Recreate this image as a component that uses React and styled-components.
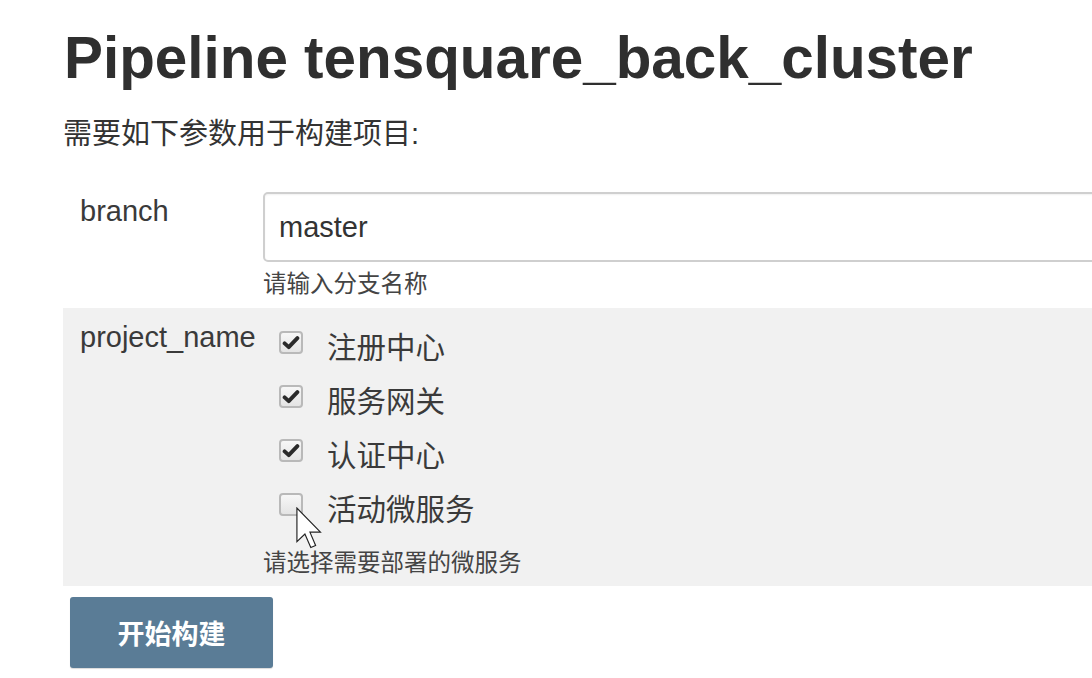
import React from "react";
import styled, { createGlobalStyle } from "styled-components";

const GlobalStyle = createGlobalStyle`
  html, body {
    margin: 0;
    padding: 0;
    background: #ffffff;
    overflow: hidden;
  }
  body {
    font-family: "Liberation Sans", Arial, "Noto Sans CJK SC", sans-serif;
    color: #333333;
  }
`;

const Page = styled.div`
  position: relative;
  width: 1092px;
  height: 678px;
  overflow: hidden;
  padding-left: 63px;
  box-sizing: border-box;
`;

const Title = styled.h1`
  margin: 23px 0 0 1px;
  font-size: 58.4px;
  line-height: 70px;
  font-weight: 700;
  color: #2f2f2f;
  white-space: nowrap;
`;

const Intro = styled.p`
  margin: 24px 0 0;
  font-size: 29px;
  line-height: 34px;
  color: #333;
`;

const Form = styled.div`
  margin-top: 34px;
  width: 1200px;
`;

const Row = styled.div`
  display: grid;
  grid-template-columns: 200px 1fr;
  background: ${(p) => (p.$shaded ? "#f1f1f1" : "transparent")};
  padding: ${(p) => p.$pad};
`;

const Label = styled.div`
  padding-left: 17px;
  margin-top: ${(p) => p.$top}px;
  font-size: 29px;
  line-height: 34px;
  color: #3a3a3a;
  white-space: nowrap;
`;

const Value = styled.div`
  display: flex;
  flex-direction: column;
  padding-top: ${(p) => p.$top || 0}px;
`;

const TextInput = styled.input`
  box-sizing: border-box;
  width: 940px;
  height: 70px;
  border: 2px solid #cfcfcf;
  border-radius: 5px;
  padding: 0 14px;
  font-family: inherit;
  font-size: 29px;
  color: #333;
  background: #fff;
  box-shadow: inset 0 1px 2px rgba(0, 0, 0, 0.06);
  outline: none;
`;

const Help = styled.div`
  margin-top: ${(p) => p.$top}px;
  font-size: 23.5px;
  line-height: 28px;
  color: #444;
  white-space: nowrap;
`;

const CheckItem = styled.label`
  display: flex;
  align-items: flex-start;
  height: 54px;
`;

const Box = styled.span`
  box-sizing: border-box;
  width: 24px;
  height: 23px;
  margin: 10px 0 0 16px;
  border: 2px solid #b9b9b9;
  border-radius: 4px;
  background: linear-gradient(#f7f7f7, #e4e4e4);
  display: flex;
  align-items: center;
  justify-content: center;
  flex: none;
`;

const CheckText = styled.span`
  margin: 10px 0 0 24px;
  font-size: 29.5px;
  line-height: 34px;
  color: #3a3a3a;
`;

const BuildButton = styled.button`
  margin: 11px 0 0 7px;
  width: 203px;
  height: 71px;
  border: none;
  border-radius: 3px;
  background: #5a7c96;
  color: #ffffff;
  font-family: inherit;
  font-size: 27px;
  font-weight: 700;
  cursor: pointer;
  box-shadow: 0 1px 1px rgba(0, 0, 0, 0.15);
`;

const Cursor = styled.svg`
  position: absolute;
  left: 295px;
  top: 507px;
  pointer-events: none;
`;

const Check = ({ checked, children }) => (
  <CheckItem>
    <Box>
      {checked && (
        <svg width="18" height="18" viewBox="0 0 24 24">
          <path
            d="M3.5 12.5 L9 17.5 L20.5 5.5"
            fill="none"
            stroke="#2a2a2a"
            strokeWidth="5.2"
            strokeLinecap="round"
            strokeLinejoin="round"
          />
        </svg>
      )}
    </Box>
    <CheckText>{children}</CheckText>
  </CheckItem>
);

const projects = [
  { name: "注册中心", checked: true },
  { name: "服务网关", checked: true },
  { name: "认证中心", checked: true },
  { name: "活动微服务", checked: false },
];

export default function App() {
  return (
    <>
      <GlobalStyle />
      <Page>
        <Title>Pipeline tensquare_back_cluster</Title>
        <Intro>需要如下参数用于构建项目:</Intro>
        <Form>
          <Row $pad="7px 0 10px">
            <Label $top={2}>branch</Label>
            <Value>
              <TextInput defaultValue="master" />
              <Help $top={8}>请输入分支名称</Help>
            </Value>
          </Row>
          <Row $shaded $pad="0 0 9px">
            <Label $top={12}>project_name</Label>
            <Value $top={13}>
              {projects.map((p) => (
                <Check key={p.name} checked={p.checked}>
                  {p.name}
                </Check>
              ))}
              <Help $top={12}>请选择需要部署的微服务</Help>
            </Value>
          </Row>
        </Form>
        <BuildButton>开始构建</BuildButton>
        <Cursor width="28" height="42" viewBox="-0.5 -0.5 12.5 20">
          <path
            d="M0 0 L0 16 L3.8 12.4 L6.6 18.8 L8.9 17.8 L6.2 11.5 L11.2 11.5 Z"
            fill="#ffffff"
            stroke="#222"
            strokeWidth="0.55"
            strokeLinejoin="miter"
          />
        </Cursor>
      </Page>
    </>
  );
}
